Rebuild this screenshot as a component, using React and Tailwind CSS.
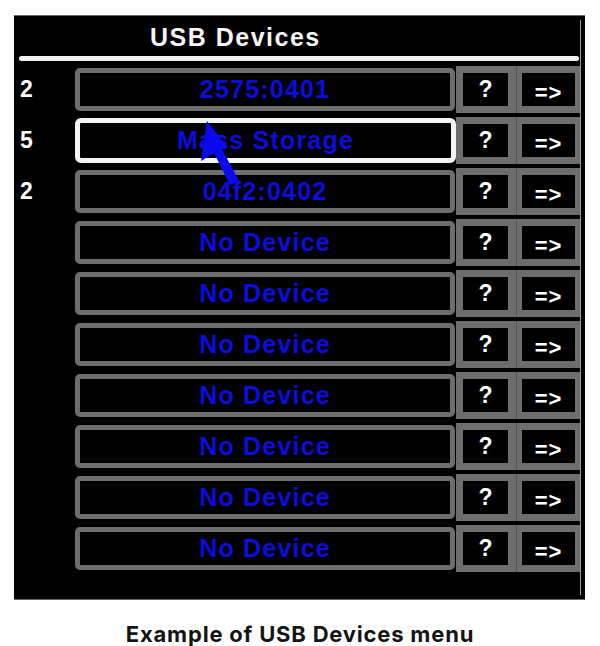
import React from "react";

const rows = [
  { num: "2", label: "2575:0401" },
  { num: "5", label: "Mass Storage", selected: true },
  { num: "2", label: "04f2:0402" },
  { num: "", label: "No Device" },
  { num: "", label: "No Device" },
  { num: "", label: "No Device" },
  { num: "", label: "No Device" },
  { num: "", label: "No Device" },
  { num: "", label: "No Device" },
  { num: "", label: "No Device" },
];

const screenFont = { fontFamily: '"Liberation Sans", Arial, sans-serif' };

const DeviceRow = ({ row }) => (
  <div className="flex h-[51px] items-center">
    <div className="w-[61px] pl-[6px] text-[23px] font-bold text-white leading-none">
      {row.num}
    </div>
    <div
      className={
        row.selected
          ? "h-[45px] w-[382px] rounded-[6px] border-[5px] border-[#f4f4f4] bg-black flex items-center justify-center"
          : "h-[43px] w-[381px] mr-[1px] rounded-[5px] border-[5px] border-[#6d6d6d] bg-black flex items-center justify-center"
      }
    >
      <span className="text-[25px] font-bold tracking-[1.2px] text-[#0c0cdc] leading-none">
        {row.label}
      </span>
    </div>
    <div className="h-[47px] w-[60px] bg-[#6d6d6d] pl-[7px] pr-[8px] py-[7px]">
      <div className="h-full bg-black flex items-center justify-center text-[23px] font-bold text-white leading-none">
        ?
      </div>
    </div>
    <div className="h-[47px] w-[64px] bg-[#6d6d6d] border-l border-[#555] pl-[5px] pr-[5px] py-[7px]">
      <div className="h-full bg-black flex items-center justify-center pt-[6px] text-[22px] font-bold tracking-[1px] text-white leading-none">
        =&gt;
      </div>
    </div>
  </div>
);

export default function App() {
  return (
    <div className="relative w-[600px] h-[646px] bg-white" style={screenFont}>
      <div className="pt-[15px] pl-[14px]">
        <div className="w-[571px] h-[585px] bg-black border-t border-b border-[#666] py-[4px]">
          <div className="w-[567px] h-full border-r border-[#9a9a9a]">
            <div className="h-[34px] flex items-center pl-[136px] text-[25px] font-bold tracking-[1.5px] text-[#f4f4f4] leading-none">
              USB Devices
            </div>
            <div className="mt-[2px] ml-[5px] w-[560px] h-[5px] rounded-full bg-[#f2f2f2]" />
            <div className="mt-[3px] flex flex-col">
              {rows.map((row, i) => (
                <DeviceRow key={i} row={row} />
              ))}
            </div>
          </div>
        </div>
      </div>

      <div
        className="mt-[23px] text-center text-[22px] font-bold tracking-[0.8px] text-[#141414] leading-none"
        style={{ fontFamily: "Inter, sans-serif" }}
      >
        Example of USB Devices menu
      </div>

      {/* pointer arrow drawn over the list */}
      <svg
        className="absolute inset-0 pointer-events-none"
        width="600"
        height="646"
        viewBox="0 0 600 646"
      >
        <polygon
          points="207,121 201,161 214,153 230,185 239,181 222,149 228,148"
          fill="#0a0aee"
        />
      </svg>
    </div>
  );
}
